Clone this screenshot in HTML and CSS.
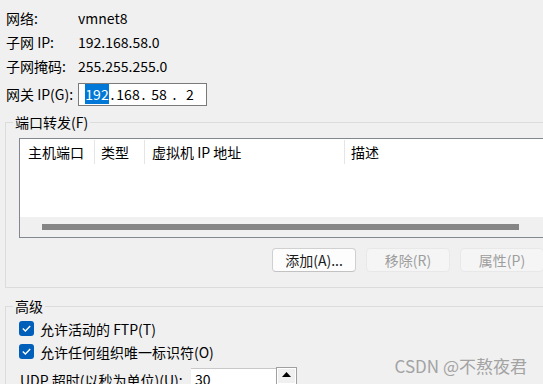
FILE: index.html
```html
<!DOCTYPE html>
<html>
<head>
	<meta charset="utf-8">
	<title>NAT 设置</title>
	<link rel="stylesheet" href="styles.css">
</head>
<body>
	<div class="net-info">
		<div class="row"><span class="key">网络:</span><span>vmnet8</span></div>
		<div class="row"><span class="key">子网 IP:</span><span>192.168.58.0</span></div>
		<div class="row"><span class="key">子网掩码:</span><span>255.255.255.0</span></div>
		<div class="row gateway">
			<span class="key">网关 IP(G):</span>
			<div class="ip-box">
				<span class="octet"><span class="selected">192</span></span><span class="dot">.</span>
				<span class="octet">168</span><span class="dot">.</span>
				<span class="octet">58</span><span class="dot">.</span>
				<span class="octet">2</span>
			</div>
		</div>
	</div>

	<fieldset class="group ports-group">
		<legend>端口转发(F)</legend>
		<div class="port-list">
			<div class="list-head">
				<span class="col col-host">主机端口</span>
				<span class="col col-type">类型</span>
				<span class="col col-vm">虚拟机 IP 地址</span>
				<span class="col col-desc">描述</span>
			</div>
			<div class="list-body"></div>
			<div class="hscroll"><div class="thumb"></div></div>
		</div>
		<div class="buttons">
			<button class="btn">添加(A)...</button>
			<button class="btn" disabled>移除(R)</button>
			<button class="btn" disabled>属性(P)</button>
		</div>
	</fieldset>

	<fieldset class="group advanced-group">
		<legend>高级</legend>
		<label class="check"><span class="box"><svg viewBox="0 0 15 15" width="15" height="15"><path d="M3.8 7.6l2.6 2.5 4.8-5" fill="none" stroke="#fff" stroke-width="1.4"/></svg></span>允许活动的 FTP(T)</label>
		<label class="check"><span class="box"><svg viewBox="0 0 15 15" width="15" height="15"><path d="M3.8 7.6l2.6 2.5 4.8-5" fill="none" stroke="#fff" stroke-width="1.4"/></svg></span>允许任何组织唯一标识符(O)</label>
		<div class="udp-row">
			<span class="udp-label">UDP 超时(以秒为单位)(U):</span>
			<span class="num-input">30</span>
			<span class="spin"><svg viewBox="0 0 9 5" width="9" height="5"><path d="M0 5L4.5 0 9 5z" fill="#000"/></svg></span>
		</div>
	</fieldset>

	<div class="watermark">CSDN @不熬夜君</div>
</body>
</html>
```

FILE: styles.css
```css
html, body {
	margin: 0;
}

body {
	position: relative;
	width: 543px;
	height: 384px;
	overflow: hidden;
	background: #f0f0f0;
	color: #000;
	font: 14px/20px "Noto Sans CJK SC", sans-serif;
}

.net-info {
	padding: 6px 0 0 6px;
}

.row {
	display: flex;
	align-items: center;
	height: 24px;
}

.row .key {
	width: 72px;
}

.row.gateway {
	margin-top: 4px;
}

.ip-box {
	display: flex;
	align-items: center;
	box-sizing: border-box;
	width: 129px;
	height: 23px;
	padding-left: 6px;
	border: 1px solid #7a7a7a;
	background: #fff;
}

.ip-box .octet {
	width: 24px;
	text-align: center;
}

.ip-box .dot {
	width: 7px;
	text-align: center;
}

.ip-box .selected {
	background: #0078d7;
	color: #fff;
}

/* group boxes */
.group {
	box-sizing: border-box;
	width: 620px;
	margin: 6px 0 0 5px;
	padding: 6px 0 15px 13px;
	border: 1px solid #dcdcdc;
	min-width: 0;
}

.group legend {
	margin-left: -6px;
	padding: 0 2px;
	line-height: 20px;
}

.port-list {
	display: flex;
	flex-direction: column;
	box-sizing: border-box;
	width: 580px;
	height: 100px;
	border: 1px solid #828790;
	background: #fff;
}

.list-head {
	display: flex;
	height: 26px;
	align-items: stretch;
}

.list-head .col {
	box-sizing: border-box;
	margin: 1px 0;
	line-height: 24px;
	border-right: 1px solid #e5e5e5;
}

.col-host { width: 75px; padding-left: 8px; }
.col-type { width: 50px; padding-left: 6px; }
.col-vm { width: 200px; padding-left: 7px; }
.col-desc { flex: 1; padding-left: 6px; border-right: 0 !important; }

.list-body {
	flex: 1;
}

.hscroll {
	height: 20px;
	background: #f0f0f0;
	padding: 7px 0 0 22px;
	box-sizing: border-box;
}

.hscroll .thumb {
	width: 477px;
	height: 6px;
	background: #858585;
}

.buttons {
	display: flex;
	gap: 10px;
	margin: 10px 0 0 253px;
}

.btn {
	box-sizing: border-box;
	width: 84px;
	height: 24px;
	padding: 0;
	border: 1px solid #d0d0d0;
	border-bottom-color: #c2c2c2;
	border-radius: 4px;
	background: #fdfdfd;
	color: #1a1a1a;
	font: inherit;
}

.btn:disabled {
	border-color: #e8e8e8;
	background: #f5f5f5;
	color: #9d9d9d;
}

.advanced-group {
	margin-top: 8px;
	padding-top: 1px;
}

.check {
	display: flex;
	align-items: center;
	height: 23px;
}

.check .box {
	display: block;
	width: 15px;
	height: 15px;
	margin-right: 6px;
	border-radius: 3px;
	background: #005fb8;
}

.check .box svg {
	display: block;
}

.udp-row {
	display: flex;
	align-items: flex-start;
	margin-top: 5px;
	height: 24px;
}

.udp-label {
	width: 171px;
	padding-left: 1px;
	margin-top: 2px;
}

.num-input {
	box-sizing: border-box;
	width: 85px;
	height: 22px;
	padding-left: 4px;
	border-top: 1px solid #c8c8c8;
	background: #fff;
	line-height: 21px;
}

.spin {
	display: flex;
	align-items: center;
	justify-content: center;
	box-sizing: border-box;
	width: 21px;
	height: 18px;
	margin-top: -1px;
	border: 1px solid #a0a0a0;
	box-shadow: inset 0 0 0 1px #fff;
	background: #f0f0f0;
	padding-bottom: 4px;
}

.watermark {
	position: absolute;
	right: 16px;
	bottom: 8px;
	font-size: 17px;
	line-height: 20px;
	color: #a3a3a3;
}
```
